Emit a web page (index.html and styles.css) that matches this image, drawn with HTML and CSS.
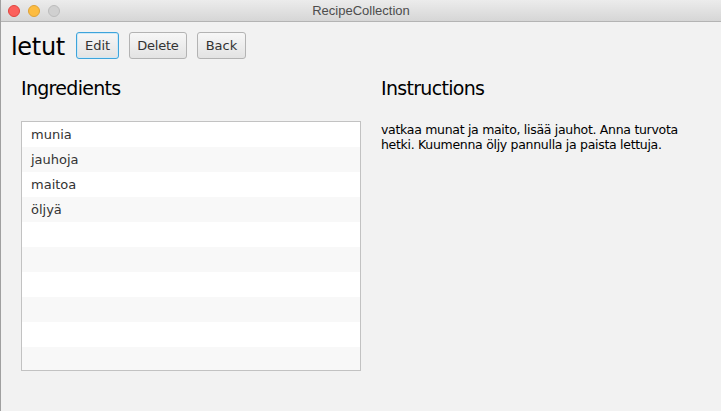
FILE: index.html
```html
<!DOCTYPE html>
<html>
<head>
<meta charset="utf-8">
<link rel="stylesheet" href="styles.css">
</head>
<body>
<div class="window">
  <div class="titlebar">
    <div class="lights">
      <span class="light red"></span>
      <span class="light yellow"></span>
      <span class="light gray"></span>
    </div>
    <div class="title">RecipeCollection</div>
  </div>
  <div class="content">
    <div class="toolbar">
      <h1 class="recipe-name">letut</h1>
      <button class="btn focused">Edit</button>
      <button class="btn tight">Delete</button>
      <button class="btn">Back</button>
    </div>
    <div class="columns">
      <section class="col">
        <h2 class="heading">Ingredients</h2>
        <ul class="list">
          <li>munia</li>
          <li>jauhoja</li>
          <li>maitoa</li>
          <li>öljyä</li>
          <li></li>
          <li></li>
          <li></li>
          <li></li>
          <li></li>
          <li></li>
        </ul>
      </section>
      <section class="col">
        <h2 class="heading">Instructions</h2>
        <p class="instructions">vatkaa munat ja maito, lisää jauhot. Anna turvota hetki. Kuumenna öljy pannulla ja paista lettuja.</p>
      </section>
    </div>
  </div>
</div>
</body>
</html>
```

FILE: styles.css
```css
html, body {
  margin: 0;
  padding: 0;
}
body {
  width: 721px;
  height: 411px;
  overflow: hidden;
  background: #f2f2f2;
  font-family: "DejaVu Sans", Verdana, sans-serif;
}
.window {
  width: 721px;
  height: 411px;
  box-sizing: border-box;
  border-left: 1px solid #a0a0a0;
  background: #f2f2f2;
  display: flex;
  flex-direction: column;
}
.titlebar {
  height: 21px;
  border-bottom: 1px solid #b4b4b4;
  background: linear-gradient(#ececec, #d6d6d6);
  position: relative;
  display: flex;
  align-items: center;
  justify-content: center;
  flex-shrink: 0;
}
.lights {
  position: absolute;
  left: 7px;
  top: 5px;
  display: flex;
  gap: 8px;
}
.light {
  width: 12px;
  height: 12px;
  border-radius: 50%;
  box-sizing: border-box;
}
.red { background: #fc605c; border: 1px solid #e0443e; }
.yellow { background: #fdbc40; border: 1px solid #dea236; }
.gray { background: #d0d0d0; border: 1px solid #bcbcbc; }
.title {
  font-family: "Liberation Sans", Arial, sans-serif;
  font-size: 13px;
  color: #4d4d4d;
}
.content {
  flex: 1;
}
.toolbar {
  display: flex;
  align-items: center;
  gap: 10px;
  padding: 10px 0 0 10px;
  height: 27px;
}
.recipe-name {
  margin: 0 1px 0 0;
  font-family: "DejaVu Sans", Verdana, sans-serif;
  font-weight: normal;
  font-size: 24px;
  letter-spacing: -0.3px;
  color: #000;
  line-height: 27px;
  position: relative;
  top: 2px;
}
.btn {
  height: 27px;
  box-sizing: border-box;
  padding: 0 8px;
  border: 1px solid #b3b3b3;
  border-radius: 3px;
  background: linear-gradient(#f7f7f7, #e3e3e3);
  font-family: "DejaVu Sans", Verdana, sans-serif;
  font-size: 13px;
  color: #333;
  margin: 0;
}
.btn.tight {
  padding: 0 7px;
  letter-spacing: -0.2px;
}
.btn.focused {
  border-color: #3da4db;
  box-shadow: inset 0 0 0 1px #cfe8f6;
}
.columns {
  display: grid;
  grid-template-columns: 340px 330px;
  column-gap: 20px;
  padding: 0 0 0 20px;
}
.heading {
  margin: 16px 0 0 0;
  font-family: "DejaVu Sans", Verdana, sans-serif;
  font-weight: normal;
  font-size: 19px;
  letter-spacing: -0.7px;
  color: #000;
  line-height: 26px;
  height: 26px;
}
.list {
  list-style: none;
  margin: 20px 0 0 0;
  padding: 0;
  border: 1px solid #c2c2c2;
  height: 248px;
  overflow: hidden;
  background: #fff;
}
.list li {
  height: 25px;
  line-height: 25px;
  padding-left: 9px;
  font-size: 13px;
  color: #333;
  background: #fff;
}
.list li:nth-child(even) {
  background: #f8f8f8;
}
.instructions {
  margin: 21px 0 0 0;
  font-size: 12.5px;
  line-height: 15px;
  color: #000;
  letter-spacing: -0.3px;
}
```
